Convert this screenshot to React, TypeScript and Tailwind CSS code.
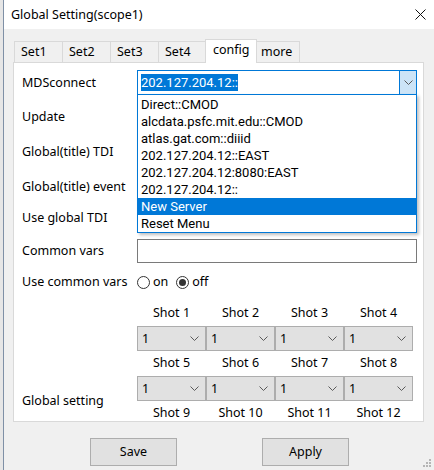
import React from 'react'

const servers = [
  'Direct::CMOD',
  'alcdata.psfc.mit.edu::CMOD',
  'atlas.gat.com::diiid',
  '202.127.204.12::EAST',
  '202.127.204.12:8080:EAST',
  '202.127.204.12::',
  'New Server',
  'Reset Menu',
]

const tabs = [
  { name: 'Set1', w: 'w-[48px]', pl: 'pl-[6px]' },
  { name: 'Set2', w: 'w-[48px]', pl: 'pl-[6px]' },
  { name: 'Set3', w: 'w-[48px]', pl: 'pl-[6px]' },
  { name: 'Set4', w: 'w-[47px]', pl: 'pl-[6px]' },
]

const listFont = { fontFamily: 'Roboto, "Noto Sans", sans-serif' }

function Chevron({ className = '' }: { className?: string }) {
  return (
    <svg width="9" height="5" viewBox="0 0 9 5" className={className}>
      <path d="M0.5 0.5 L4.5 4.5 L8.5 0.5" fill="none" stroke="#5a5a5a" strokeWidth="1" />
    </svg>
  )
}

function ShotSelect() {
  return (
    <div className="w-[69px] h-[25px] bg-[#e1e1e1] border border-[#adadad] flex items-center justify-between pl-[4px] pr-[6px]">
      <span>1</span>
      <Chevron />
    </div>
  )
}

function ShotLabels({ from }: { from: number }) {
  return (
    <div className="flex h-[16px]">
      {[0, 1, 2, 3].map((i) => (
        <div key={i} className="w-[69px] flex items-center justify-center">Shot {from + i}</div>
      ))}
    </div>
  )
}

function Row({ label, mt, h = 'h-[24px]', children }: { label: string; mt: string; h?: string; children?: React.ReactNode }) {
  return (
    <div className={`flex items-center ${h} ${mt}`}>
      <div className="w-[115px] shrink-0">{label}</div>
      {children}
    </div>
  )
}

export default function App() {
  return (
    <div
      className="w-[434px] h-[470px] flex bg-[#f0f0f0] overflow-hidden text-[12.5px] leading-[16px] text-black"
      style={{ fontFamily: '"Noto Sans", "Segoe UI", sans-serif' }}
    >
      <div className="w-[3px] shrink-0 bg-[#e6e6e6]" />
      <div className="flex-1 flex flex-col border-l border-[#7f90a6] relative">
        {/* title bar */}
        <div className="h-[29px] bg-white flex items-center justify-between pl-[7px] pr-[8px]">
          <span>Global Setting(scope1)</span>
          <svg width="11" height="11" viewBox="0 0 11 11">
            <path d="M0.5 0.5 L10.5 10.5 M10.5 0.5 L0.5 10.5" stroke="#111" strokeWidth="1" />
          </svg>
        </div>

        {/* tabs */}
        <div className="flex items-end h-[23px] mt-[10px] ml-[10px]">
          {tabs.map((t) => (
            <div key={t.name} className={`${t.w} ${t.pl} h-[21px] bg-[#f0f0f0] border-l border-t border-[#d9d9d9] flex items-center`}>
              {t.name}
            </div>
          ))}
          <div className="w-[52px] h-[24px] -mb-[1px] relative z-10 bg-white border-l border-t border-r border-[#d9d9d9] flex items-center pl-[7px] pb-[3px]">
            config
          </div>
          <div className="w-[43px] h-[21px] bg-[#f0f0f0] border-t border-r border-[#d9d9d9] flex items-center pl-[4px]">
            more
          </div>
        </div>

        {/* panel */}
        <div className="ml-[9px] w-[411px] h-[360px] border border-[#d9d9d9] bg-white relative overflow-hidden pl-[8px] pt-[7px]">
          <Row label="MDSconnect" mt="mt-0" h="h-[25px]">
            <div className="w-[280px] h-[25px] border border-[#0078d7] flex items-center text-[13px] leading-[17px]" style={listFont}>
              <div className="flex-1 pl-[3px]">
                <span className="bg-[#0078d7] text-white inline-block">202.127.204.12::</span>
              </div>
              <div className="w-[17px] h-full bg-[#cce4f7] border-l border-[#0078d7] flex items-center justify-center">
                <Chevron />
              </div>
            </div>
          </Row>
          <Row label="Update" mt="mt-[10px]" />
          <Row label="Global(title) TDI" mt="mt-[11px]" />
          <Row label="Global(title) event" mt="mt-[11px]" />
          <Row label="Use global TDI" mt="mt-[7px]" />
          <Row label="Common vars" mt="mt-[9px]" h="h-[24px]">
            <div className="w-[280px] h-[24px] border border-[#7a7a7a] bg-white" />
          </Row>
          <Row label="Use common vars" mt="mt-[7px]">
            <div className="flex items-center">
              <span className="w-[13px] h-[13px] rounded-full border border-[#333] bg-white" />
              <span className="ml-[3px]">on</span>
              <span className="ml-[8px] w-[13px] h-[13px] rounded-full border border-[#333] bg-white flex items-center justify-center">
                <span className="w-[7px] h-[7px] rounded-full bg-[#333]" />
              </span>
              <span className="ml-[3px]">off</span>
            </div>
          </Row>

          {/* shots */}
          <div className="flex mt-[11px]">
            <div className="w-[115px] shrink-0 flex flex-col justify-end pb-[12px]">
              <div className="h-[16px] flex items-center">Global setting</div>
            </div>
            <div className="flex flex-col">
              <ShotLabels from={1} />
              <div className="flex mt-[5px]">
                {[0, 1, 2, 3].map((i) => <ShotSelect key={i} />)}
              </div>
              <div className="mt-[4px]"><ShotLabels from={5} /></div>
              <div className="flex mt-[5px]">
                {[0, 1, 2, 3].map((i) => <ShotSelect key={i} />)}
              </div>
              <div className="mt-[4px]"><ShotLabels from={9} /></div>
            </div>
          </div>

          {/* open dropdown list */}
          <div
            className="absolute left-[123px] top-[31px] w-[280px] h-[139px] bg-white border border-[#0078d7] shadow-[2px_2px_3px_rgba(0,0,0,0.25)] flex flex-col text-[13px] leading-[17px] pt-[1px]"
            style={listFont}
          >
            {servers.map((s) => (
              <div
                key={s}
                className={`h-[17px] pl-[3px] flex items-center ${s === 'New Server' ? 'bg-[#0078d7] text-white' : ''}`}
              >
                {s}
              </div>
            ))}
          </div>
        </div>

        {/* buttons */}
        <div className="flex mt-[16px] pl-[86px] gap-[85px]">
          <div className="w-[87px] h-[28px] bg-[#e1e1e1] border border-[#adadad] flex items-center justify-center">Save</div>
          <div className="w-[87px] h-[28px] bg-[#e1e1e1] border border-[#adadad] flex items-center justify-center">Apply</div>
        </div>

        {/* resize grip */}
        <svg className="absolute right-[2px] bottom-[2px]" width="10" height="10" viewBox="0 0 10 10">
          <rect x="7" y="1" width="2" height="2" fill="#b5b5b5" />
          <rect x="4" y="4" width="2" height="2" fill="#b5b5b5" />
          <rect x="7" y="4" width="2" height="2" fill="#b5b5b5" />
          <rect x="1" y="7" width="2" height="2" fill="#b5b5b5" />
          <rect x="4" y="7" width="2" height="2" fill="#b5b5b5" />
          <rect x="7" y="7" width="2" height="2" fill="#b5b5b5" />
        </svg>
      </div>
    </div>
  )
}
